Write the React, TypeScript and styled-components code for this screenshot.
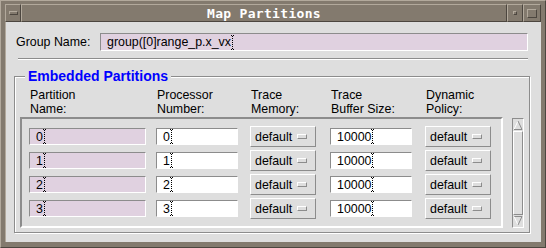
import React from 'react';
import styled, { createGlobalStyle } from 'styled-components';

/* Palette */
const BG = '#dedede';
const SHADOW = '#8c8c8c';
const LIGHT = '#ffffff';
const LAVENDER = '#e0d1e0';
const FRAME = '#837a6e';
const FRAME_LIGHT = '#b2a99c';
const FRAME_DARK = '#4c463f';

const GlobalStyle = createGlobalStyle`
    html, body {
        margin: 0;
        padding: 0;
        background: ${FRAME};
    }
    body {
        font-family: "Liberation Sans", Arial, sans-serif;
        font-size: 12.4px;
        color: #000;
    }
`;

const columns = [
    { title: ['Partition', 'Name:'] },
    { title: ['Processor', 'Number:'] },
    { title: ['Trace', 'Memory:'] },
    { title: ['Trace', 'Buffer Size:'] },
    { title: ['Dynamic', 'Policy:'] },
];

const rows = ['0', '1', '2', '3'];

// Motif's dotted I-beam shown in text fields that don't hold the focus
const Cursor: React.FC = () => (
    <CursorSvg width="5" height="15" viewBox="0 0 5 15">
        <rect x="1" y="0" width="1" height="1" />
        <rect x="3" y="0" width="1" height="1" />
        <rect x="2" y="1" width="1" height="1" />
        <rect x="2" y="3" width="1" height="1" />
        <rect x="2" y="5" width="1" height="1" />
        <rect x="2" y="7" width="1" height="1" />
        <rect x="2" y="9" width="1" height="1" />
        <rect x="2" y="11" width="1" height="1" />
        <rect x="2" y="13" width="1" height="1" />
        <rect x="1" y="14" width="1" height="1" />
        <rect x="3" y="14" width="1" height="1" />
    </CursorSvg>
);

const Field: React.FC<{ value: string; width?: number; height: number; bg: string }> = ({
    value,
    width,
    height,
    bg,
}) => (
    <TextField $width={width} $height={height} $bg={bg}>
        <FieldText>{value}</FieldText>
        <Cursor />
    </TextField>
);

const Option: React.FC<{ value: string }> = ({ value }) => (
    <OptionMenu>
        <span>{value}</span>
        <Indicator />
    </OptionMenu>
);

const Arrow: React.FC<{ down?: boolean }> = ({ down }) => (
    <ArrowBox $down={down}>
        <svg width="10" height="11" viewBox="0 0 10 11">
            {down ? (
                <>
                    <path d="M1 1.5 L9 1.5" stroke={SHADOW} />
                    <path d="M1 1.5 L5 10" stroke={LIGHT} />
                    <path d="M9 1.5 L5 10" stroke={SHADOW} />
                </>
            ) : (
                <>
                    <path d="M5 1 L1 9.5" stroke={LIGHT} />
                    <path d="M5 1 L9 9.5" stroke={SHADOW} />
                    <path d="M1 9.5 L9 9.5" stroke={SHADOW} />
                </>
            )}
        </svg>
    </ArrowBox>
);

export default function App() {
    return (
        <>
            <GlobalStyle />
            <Window>
                <TitleBar>
                    <TitleButton $w={16}>
                        <MenuGlyph />
                    </TitleButton>
                    <TitleArea>Map Partitions</TitleArea>
                    <TitleButton $w={16}>
                        <MinGlyph />
                    </TitleButton>
                    <TitleButton $w={18}>
                        <MaxGlyph />
                    </TitleButton>
                </TitleBar>

                <Content>
                    <GroupRow>
                        <Label>Group Name:</Label>
                        <Field value="group([0]range_p.x_vx" height={18} bg={LAVENDER} />
                    </GroupRow>

                    <Separator />

                    <GroupBox>
                        <Legend>Embedded Partitions</Legend>
                        <GroupBody>
                            <HeaderGrid>
                                {columns.map((c) => (
                                    <HeaderCell key={c.title.join(' ')}>
                                        {c.title[0]}
                                        <br />
                                        {c.title[1]}
                                    </HeaderCell>
                                ))}
                            </HeaderGrid>

                            <TableRow>
                                <TableFrame>
                                    {rows.map((r) => (
                                        <Row key={r}>
                                            <Field value={r} width={117} height={17} bg={LAVENDER} />
                                            <Field value={r} width={82} height={17} bg={LIGHT} />
                                            <Option value="default" />
                                            <Field value="10000" width={82} height={17} bg={LIGHT} />
                                            <Option value="default" />
                                        </Row>
                                    ))}
                                </TableFrame>

                                <ScrollBar>
                                    <Arrow />
                                    <Slider />
                                    <Arrow down />
                                </ScrollBar>
                            </TableRow>
                        </GroupBody>
                    </GroupBox>
                </Content>
            </Window>
        </>
    );
}

/* Styles */
const Window = styled.div`
    width: 546px;
    height: 248px;
    box-sizing: border-box;
    display: flex;
    flex-direction: column;
    background: ${FRAME};
    border: 1px solid;
    border-color: ${FRAME_LIGHT} ${FRAME_DARK} ${FRAME_DARK} ${FRAME_LIGHT};
    padding: 3px 4px 5px 4px;
`;

const TitleBar = styled.div`
    display: flex;
    height: 18px;
    flex-shrink: 0;
`;

const Bevel = styled.div`
    box-sizing: border-box;
    border: 1px solid;
    border-color: ${FRAME_LIGHT} ${FRAME_DARK} ${FRAME_DARK} ${FRAME_LIGHT};
`;

const TitleButton = styled(Bevel)<{ $w: number }>`
    width: ${(p) => p.$w}px;
    display: flex;
    align-items: center;
    justify-content: center;
`;

const TitleArea = styled(Bevel)`
    flex: 1;
    display: flex;
    align-items: center;
    justify-content: center;
    color: #fff;
    font-family: "DejaVu Sans Mono", "Liberation Mono", monospace;
    font-weight: bold;
    font-size: 13px;
    letter-spacing: 0.3px;
`;

const MenuGlyph = styled(Bevel)`
    width: 9px;
    height: 4px;
`;

const MinGlyph = styled(Bevel)`
    width: 4px;
    height: 4px;
`;

const MaxGlyph = styled(Bevel)`
    width: 10px;
    height: 9px;
`;

const Content = styled.div`
    flex: 1;
    display: flex;
    flex-direction: column;
    background: ${BG};
    border-left: 1px solid ${FRAME_LIGHT};
`;

const GroupRow = styled.div`
    display: flex;
    align-items: center;
    padding: 11px 13px 0 10px;
`;

const Label = styled.div`
    width: 84px;
    flex-shrink: 0;
`;

const TextField = styled.div<{ $width?: number; $height: number; $bg: string }>`
    box-sizing: border-box;
    ${(p) => (p.$width ? `width: ${p.$width}px;` : 'flex: 1;')}
    height: ${(p) => p.$height}px;
    display: flex;
    align-items: center;
    padding-left: 6px;
    background-color: ${(p) => p.$bg};
    border: 1px solid;
    border-color: ${SHADOW} ${LIGHT} ${LIGHT} ${SHADOW};
`;

const FieldText = styled.span`
    white-space: pre;
`;

const CursorSvg = styled.svg`
    fill: #000;
    margin-left: -1px;
    flex-shrink: 0;
`;

const Separator = styled.div`
    margin: 7px 13px 0 12px;
    border-top: 1px solid ${SHADOW};
    border-bottom: 1px solid ${LIGHT};
`;

const GroupBox = styled.fieldset`
    margin: 8px 11px 0 8px;
    padding: 0;
    min-width: 0;
    border: 1px solid ${SHADOW};
    box-shadow: inset 1px 1px 0 ${LIGHT}, 1px 1px 0 ${LIGHT};
`;

const Legend = styled.legend`
    margin-left: 10px;
    padding: 0 3px;
    background: ${BG};
    color: #0000ff;
    font-weight: bold;
    font-size: 14px;
    line-height: 17px;
`;

const GroupBody = styled.div`
    display: flex;
    flex-direction: column;
    padding: 3px 0 4px 5px;
`;

const gridColumns = '127px 94px 80px 95px 66px';

const HeaderGrid = styled.div`
    display: grid;
    grid-template-columns: ${gridColumns};
    padding-left: 10px;
    line-height: 14px;
`;

const HeaderCell = styled.div`
    white-space: nowrap;
`;

const TableRow = styled.div`
    display: flex;
    gap: 9px;
    margin-top: 1px;
`;

const TableFrame = styled.div`
    box-sizing: border-box;
    width: 483px;
    display: flex;
    flex-direction: column;
    gap: 3px;
    padding: 7px 10px 7px 7px;
    border: 2px solid;
    border-color: ${SHADOW} ${LIGHT} ${LIGHT} ${SHADOW};
`;

const Row = styled.div`
    display: grid;
    grid-template-columns: ${gridColumns};
    align-items: center;
    height: 21px;
`;

const OptionMenu = styled.div`
    box-sizing: border-box;
    width: 66px;
    height: 21px;
    display: flex;
    align-items: center;
    justify-content: space-between;
    padding: 0 8px 0 4px;
    border: 1px solid;
    border-color: ${LIGHT} ${SHADOW} ${SHADOW} ${LIGHT};
`;

const Indicator = styled.div`
    box-sizing: border-box;
    width: 10px;
    height: 5px;
    border: 1px solid;
    border-color: ${LIGHT} ${SHADOW} ${SHADOW} ${LIGHT};
`;

const ScrollBar = styled.div`
    box-sizing: border-box;
    width: 12px;
    height: 110px;
    margin-top: 1px;
    display: flex;
    flex-direction: column;
    border: 1px solid;
    border-color: ${SHADOW} ${LIGHT} ${LIGHT} ${SHADOW};
`;

const ArrowBox = styled.div<{ $down?: boolean }>`
    height: 12px;
    display: flex;
    justify-content: center;
    align-items: ${(p) => (p.$down ? 'flex-start' : 'flex-end')};
    svg {
        display: block;
    }
`;

const Slider = styled.div`
    flex: 1;
    box-sizing: border-box;
    border: 1px solid;
    border-color: ${LIGHT} ${SHADOW} ${SHADOW} ${LIGHT};
`;
